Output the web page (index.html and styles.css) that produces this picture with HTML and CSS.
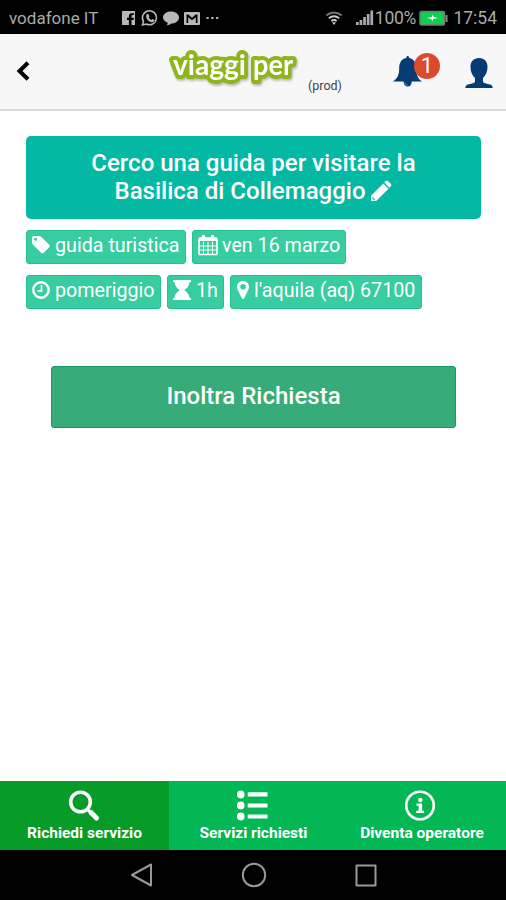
FILE: index.html
```html
<!DOCTYPE html>
<html lang="it">
<head>
<meta charset="utf-8">
<title>Viaggi per</title>
<link rel="stylesheet" href="styles.css">
</head>
<body>
<div class="phone">
  <div class="status">
    <span class="carrier">vodafone IT</span>
    <svg class="notif" width="100" height="18" viewBox="0 0 100 18">
      <path fill="#b8b8b8" d="M1 2h13v14h-3.500v-5h2l.4-2.300h-2.400V7.300q0-1.200 1.300-1.200h1.100V4.200h-2q-3 0-3 3v1.500H6V11h1.900v5H1z"/>
      <path fill="none" stroke="#b8b8b8" stroke-width="1.500" d="M21.500 16l1-3.500a7 7 0 1 1 2.700 2.500z"/>
      <path fill="#b8b8b8" d="M25.600 5.500l1.600-.7 1.300 2.500-.8 1.200q1 1.700 2.600 2.400l1.100-1 2.100 1.200q0 2-2.300 2.200c-3.800-.3-6.300-4-6-6.300z"/>
      <path fill="#b8b8b8" d="M50 2.500c4.600 0 8 2.700 8 6s-3.400 6-7.700 6q-2 2-4.500 1.800 1-1.200.9-2.600C44 12.500 42 10.700 42 8.500c0-3.300 3.400-6 8-6z"/>
      <path fill="#b8b8b8" fill-rule="evenodd" d="M64 3h14q1 0 1 1v11q0 1-1 1H64q-1 0-1-1V4q0-1 1-1zm1.500 2.500V14h1.700V8.200l3.800 3 3.800-3V14h1.700V5.500h-1.800L71 8.700l-3.700-3.200z"/>
      <path fill="#b8b8b8" d="M85.500 8h2.200v2h-2.200zM90.300 8h2.200v2h-2.200zM95.100 8h2.200v2h-2.200z"/>
    </svg>
    <svg class="wifi" width="18" height="18" viewBox="0 0 18 18" fill="none" stroke="#aaa">
      <path stroke="#777" stroke-width="1.800" d="M1.300 6.500q7.700-6 15.400 0"/><path stroke="#ccc" stroke-width="1.900" d="M3.800 9.300q5.200-4.300 10.400 0M6.300 12q2.700-2 5.400 0"/><path fill="#ccc" stroke="none" d="M7 13.300h4L9 16z"/>
    </svg>
    <svg class="signal" width="18" height="18" viewBox="0 0 18 18" fill="#aaa"><path d="M0 13h2.700v3H0zM3.600 11h2.700v5H3.600zM7.200 8h2.700v8H7.200zM10.800 5h2.700v11h-2.700zM14.400 1.500h2.700V16h-2.700z"/></svg>
    <span class="percent">100%</span>
    <svg class="battery" width="29" height="17" viewBox="0 0 29 17"><rect x="1" y="1.500" width="24.500" height="13.500" rx="1.500" fill="#0bd14f" stroke="#777" stroke-width="1.500"/><path fill="#888" d="M26.500 5H28.500v7h-2z"/><path fill="#fff" d="M8 8l5-1V4.800l2 2.200 4 1-5 1v2.300L12 9z"/></svg>
    <span class="clock">17:54</span>
  </div>

  <header class="topbar">
    <svg class="back" width="14" height="20" viewBox="0 0 14 20"><path fill="none" stroke="#000" stroke-width="4" d="M12 1.700L3.500 10l8.500 8.300"/></svg>
    <svg class="logo" width="136" height="46" viewBox="0 0 136 46"><text x="7" y="27" textLength="73" lengthAdjust="spacingAndGlyphs">viaggi</text><text x="87" y="27" textLength="40" lengthAdjust="spacingAndGlyphs">per</text></svg>
    <span class="env">(prod)</span>
    <span class="alerts">
      <svg width="32" height="35" viewBox="0 0 32 35"><path fill="#063b73" d="M14.200 3q0-2 1.500-2t1.500 2c5 1.200 7 5 7 10 0 7 1.700 10.700 5.800 13.500H19.800q-.4 5-4.100 5t-4.100-5H1C5.500 23.500 7.200 20 7.200 13c0-5 2-8.800 7-10z"/><path d="M13 27.500q.2 2.500 2.600 2.800" fill="none" stroke="#6686a8"/></svg>
      <span class="badge">1</span>
    </span>
    <svg class="user" width="30" height="32" viewBox="0 0 30 32"><path fill="#063b73" d="M15 1c5.500 0 8.500 3.500 8.500 9 0 5-2 8.500-4.500 11v3.500q0 1.500 3 2l5 1.300q1.500.7 1.800 3.200H1.200q.3-2.500 1.800-3.200l5-1.300q3-.5 3-2V21C8.500 18.500 6.500 15 6.500 10c0-5.500 3-9 8.500-9z"/></svg>
  </header>

  <main class="content">
    <h1 class="request">Cerco una guida per visitare la<br>Basilica di Collemaggio <svg class="pencil" width="22" height="22" viewBox="0 0 22 22" fill="#fff"><path d="M13.300 3.500l5.200 5.200L6.200 21H1v-5.200zM14.300 2.600L15.900 1q1-.8 2 0L21 4.100q.8 1 0 2L19.400 7.700z"/><path d="M3 17v2.200h2.200" fill="none" stroke="#03b9a3" stroke-width="1"/></svg></h1>
    <div class="tags">
      <span class="tag category"><svg width="20" height="20" viewBox="0 0 20 20"><path fill="#fff" fill-rule="evenodd" d="M1 3q0-2 2-2h5q1.300 0 2.300 1l8 7.700q1.200 1.300 0 2.600l-5.500 5.500q-1.300 1.200-2.600 0L2 9.800Q1 8.800 1 7.700zm3.500-.3a1.500 1.500 0 1 0 .1 3 1.500 1.500 0 0 0-.1-3z"/></svg>guida turistica</span>
      <span class="tag date"><svg width="20" height="22" viewBox="0 0 20 22" fill="none" stroke="#fff"><rect x="1" y="4" width="18" height="16.500" rx="1" stroke-width="1.600"/><path stroke-width="3" d="M1 5.500h18"/><path stroke-width="3.200" stroke-linecap="round" d="M5.500 2.300v3.500M14.500 2.300v3.500"/><path stroke-width="1" d="M5.500 8v12M10 8v12M14.500 8v12M1 12h18M1 16h18"/></svg>ven 16 marzo</span>
    </div>
    <div class="tags">
      <span class="tag period"><svg width="20" height="20" viewBox="0 0 20 20" fill="none" stroke="#fff"><circle cx="10" cy="10" r="7.700" stroke-width="2.400"/><path stroke-width="1.700" d="M10.500 5v6H6.500"/></svg>pomeriggio</span>
      <span class="tag duration"><svg width="20" height="22" viewBox="0 0 20 22" fill="#fff"><path d="M1 1h18v2H1zM1 19h18v2H1zM2.500 3h15q-.5 5-5.200 8 4.700 3 5.200 8h-15q.5-5 5.200-8-4.700-3-5.200-8z"/></svg>1h</span>
      <span class="tag place"><svg width="14" height="20" viewBox="0 0 14 20"><path fill="#fff" fill-rule="evenodd" d="M7 1c3.600 0 6 2.500 6 5.800 0 1.700-.4 2.500-1.200 4L8.300 18q-1.300 1.900-2.600 0l-3.500-7.200C1.400 9.300 1 8.500 1 6.800 1 3.500 3.400 1 7 1zm0 3a2.800 2.800 0 1 0 .1 5.600A2.800 2.800 0 0 0 7 4z"/></svg>l'aquila (aq) 67100</span>
    </div>
    <button class="submit">Inoltra Richiesta</button>
  </main>

  <nav class="tabs">
    <a class="tab active"><svg width="34" height="32" viewBox="0 0 34 32" fill="none" stroke="#fff"><circle cx="12.500" cy="12" r="9.800" stroke-width="3.600"/><path stroke-width="3" d="M19 19l4 4"/><path stroke-width="5" stroke-linecap="round" d="M23 22.500l5.500 5.500"/></svg><span>Richiedi servizio</span></a>
    <a class="tab"><svg width="34" height="32" viewBox="0 0 34 32" fill="#fff"><circle cx="3.700" cy="4.500" r="3.900"/><circle cx="3.700" cy="15.500" r="3.900"/><circle cx="3.700" cy="26.500" r="3.900"/><path d="M10.700 2.300h19.800v4.200H10.700zM10.700 13.400h19.800v4.200H10.700zM10.700 24.400h19.800v4.200H10.700z"/></svg><span>Servizi richiesti</span></a>
    <a class="tab"><svg width="34" height="32" viewBox="0 0 34 32"><circle cx="15" cy="15.500" r="13.800" fill="none" stroke="#fff" stroke-width="2.600"/><circle cx="15.300" cy="10" r="2.200" fill="#fff"/><path fill="#fff" d="M11.500 13.500h5.600v7.200h2v2.300h-7.800v-2.300h2.300v-4.900h-2.100z"/></svg><span>Diventa operatore</span></a>
  </nav>

  <div class="sysnav">
    <svg width="24" height="26" viewBox="0 0 24 26"><path d="M22 2.500v21L3 13z"/></svg>
    <svg width="26" height="26" viewBox="0 0 26 26"><circle cx="13" cy="13" r="11.200"/></svg>
    <svg width="24" height="26" viewBox="0 0 24 26"><rect x="2.500" y="3.500" width="19" height="20"/></svg>
  </div>
</div>
</body>
</html>
```

FILE: styles.css
```css
* { box-sizing: border-box; }
body { margin: 0; font-family: Roboto, "Liberation Sans", sans-serif; background: #fff; }
svg { display: block; flex: none; }
.phone { width: 506px; height: 900px; display: flex; flex-direction: column; overflow: hidden; }

.status { height: 34px; flex: none; background: #000; color: #aaa; display: flex; align-items: center; padding: 2px 9px 0; font-size: 17.500px; white-space: nowrap; }
.carrier { width: 113px; font-size: 17px; }
.wifi { margin-left: 104px; }
.signal { margin-left: 13px; }
.percent { margin-left: 1px; width: 45px; letter-spacing: -0.3px; }
.clock { margin-left: 5px; }

.topbar { height: 77px; flex: none; background: #f7f7f7; border-bottom: 2px solid #d9d9d9; display: flex; align-items: flex-start; padding-left: 16px; }
.back { margin-top: 27px; }
.logo { margin: 14px 0 0 136px; overflow: visible; filter: drop-shadow(1px 2px 1px #bbb); }
.logo text { font: 700 29px Lato, sans-serif; fill: #fff; stroke: #8eb51c; stroke-width: 8px; stroke-linejoin: round; paint-order: stroke; }
.env { margin: 44px 0 0 6px; width: 36px; font-size: 12.500px; line-height: 16px; color: #444; }
.alerts { position: relative; margin: 21px 0 0 48px; width: 50px; }
.badge { position: absolute; left: 22px; top: -2px; width: 26px; height: 26px; border-radius: 50%; background: #dc4a2d; color: #fff; font-size: 22px; line-height: 26px; text-align: center; }
.user { margin: 23px 0 0 22px; }

.content { flex: 1; padding: 25px 25px 0 26px; }
.request { margin: 0 0 11px; height: 83px; padding-top: 13px; border-radius: 5px; background: #03b9a3; color: #fff; font-size: 24px; font-weight: 500; line-height: 28px; text-align: center; white-space: nowrap; }
.pencil { display: inline-block; vertical-align: -3px; margin-left: -1px; }
.tags { display: flex; gap: 6px; height: 34px; margin-bottom: 11px; }
.tag { display: flex; align-items: center; gap: 4px; height: 34px; padding: 0 0 4px 4px; border-radius: 3px; border: 1px solid #25c193; background: #38cda0; color: #fff; font-size: 19.700px; white-space: nowrap; }
.category { width: 160px; }
.date { width: 154px; padding-left: 5px; }
.period { width: 135px; }
.duration { width: 57px; }
.place { width: 192px; padding-left: 5px; }
.submit { display: block; margin: 57px 0 0 25px; width: 405px; height: 62px; padding: 0 0 2px; border: 1px solid #109b61; border-radius: 3px; background: #37ab78; color: #fff; font: 500 24px Roboto, sans-serif; }

.tabs { height: 69px; flex: none; display: grid; grid-template-columns: 169px 169px 168px; background: #04b755; }
.tab { display: flex; flex-direction: column; align-items: center; padding-top: 9px; color: #fff; font-size: 15.500px; line-height: 20px; font-weight: 700; white-space: nowrap; }
.tab span { margin-top: 1px; }
.active { background: #079b27; }

.sysnav { height: 50px; flex: none; display: flex; justify-content: space-between; align-items: center; padding: 0 128px 0 129px; background: #000; }
.sysnav svg { fill: none; stroke: #999; stroke-width: 2; stroke-linejoin: round; }
```
